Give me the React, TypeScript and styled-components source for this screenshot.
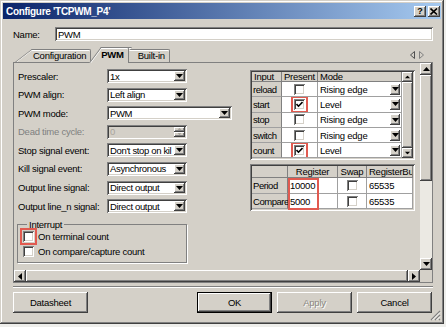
import React from 'react'
import styled, { createGlobalStyle } from 'styled-components'

const FONT = `"Liberation Sans", Arial, sans-serif`
const FACE = '#d4d0c8'
const RAISED = `inset -1px -1px #404040, inset 1px 1px #ffffff, inset -2px -2px #808080, inset 2px 2px ${FACE}`
const SUNKEN = `inset 1px 1px #808080, inset -1px -1px #ffffff, inset 2px 2px #404040, inset -2px -2px ${FACE}`
const MARK = '#e15a50'

type Dir = 'up' | 'down' | 'left' | 'right'

const ARROWS: Record<Dir, { w: number; h: number; pts: string }> = {
  up: { w: 7, h: 4, pts: '0,4 7,4 3.5,0' },
  down: { w: 7, h: 4, pts: '0,0 7,0 3.5,4' },
  left: { w: 4, h: 7, pts: '4,0 4,7 0,3.5' },
  right: { w: 4, h: 7, pts: '0,0 0,7 4,3.5' },
}

const Arrow = ({ dir, color = '#000' }: { dir: Dir; color?: string }) => {
  const a = ARROWS[dir]
  return (
    <svg width={a.w} height={a.h} viewBox={`0 0 ${a.w} ${a.h}`}>
      <polygon points={a.pts} fill={color} />
    </svg>
  )
}

const Check = ({ checked, marked }: { checked?: boolean; marked?: boolean }) => (
  <CheckBox $marked={marked}>
    {checked && (
      <svg width="7" height="7" viewBox="0 0 7 7">
        <path d="M0.5 3 L2.5 5.2 L6.5 1" stroke="#000" strokeWidth="1.6" fill="none" />
      </svg>
    )}
  </CheckBox>
)

const fields = [
  { label: 'Prescaler:', value: '1x', w: 80 },
  { label: 'PWM align:', value: 'Left align', w: 80 },
  { label: 'PWM mode:', value: 'PWM', w: 125 },
  { label: 'Dead time cycle:', value: '0', w: 80, spin: true },
  { label: 'Stop signal event:', value: "Don't stop on kil", w: 80 },
  { label: 'Kill signal event:', value: 'Asynchronous', w: 80 },
  { label: 'Output line signal:', value: 'Direct output', w: 80 },
  { label: 'Output line_n signal:', value: 'Direct output', w: 80 },
]

const inputs = [
  { name: 'reload', on: false, mode: 'Rising edge' },
  { name: 'start', on: true, mode: 'Level' },
  { name: 'stop', on: false, mode: 'Rising edge' },
  { name: 'switch', on: false, mode: 'Rising edge' },
  { name: 'count', on: true, mode: 'Level' },
]

const registers = [
  { name: 'Period', value: '10000', buf: '65535' },
  { name: 'Compare', value: '5000', buf: '65535' },
]

const App = () => {
  return (
    <>
      <GlobalStyle />
      <Dialog>
        <TitleBar>
          <TitleText>Configure 'TCPWM_P4'</TitleText>
          <CaptionButtons>
            <CaptionButton><HelpMark>?</HelpMark></CaptionButton>
            <CaptionButton>
              <svg width="8" height="7" viewBox="0 0 8 7">
                <path d="M0.5 0.5 L7 6.5 M7 0.5 L0.5 6.5" stroke="#000" strokeWidth="1.6" />
              </svg>
            </CaptionButton>
          </CaptionButtons>
        </TitleBar>

        <Client>
          <NameRow>
            <NameLabel>Name:</NameLabel>
            <TextBox>PWM</TextBox>
          </NameRow>

          <TabStrip>
            <Tab $slant={17} $pad={18}><TabLabel>Configuration</TabLabel></Tab>
            <Tab $slant={12} $pad={12} $overlap={2} $active><TabLabel>PWM</TabLabel></Tab>
            <Tab $slant={17} $pad={26} $overlap={17}><TabLabel>Built-in</TabLabel></Tab>
            <TabScroll>
              <svg width="5" height="8" viewBox="0 0 5 8"><polygon points="4.5,0.5 4.5,7.5 0.5,4" fill="none" stroke="#505050" /></svg>
              <svg width="5" height="8" viewBox="0 0 5 8"><polygon points="0.5,0.5 0.5,7.5 4.5,4" fill="none" stroke="#808080" /></svg>
            </TabScroll>
          </TabStrip>

          <Panel>
            <Viewport>
              <Form>
                {fields.map((f) => (
                  <FormRow key={f.label}>
                    <FieldLabel $disabled={f.spin}>{f.label}</FieldLabel>
                    {f.spin ? (
                      <Spin $w={f.w}>
                        <SpinText>{f.value}</SpinText>
                        <SpinButtons>
                          <SpinButton><Arrow dir="up" color="#a8a49c" /></SpinButton>
                          <SpinButton><Arrow dir="down" color="#a8a49c" /></SpinButton>
                        </SpinButtons>
                      </Spin>
                    ) : (
                      <Combo $w={f.w}>
                        <ComboText>{f.value}</ComboText>
                        <DropButton><Arrow dir="down" /></DropButton>
                      </Combo>
                    )}
                  </FormRow>
                ))}
                <Group>
                  <Legend>Interrupt</Legend>
                  <CheckRow>
                    <Check marked />
                    <span>On terminal count</span>
                  </CheckRow>
                  <CheckRow>
                    <Check />
                    <span>On compare/capture count</span>
                  </CheckRow>
                </Group>
              </Form>

              <Side>
                <GridFrame>
                  <InputGrid>
                    <HeadCell>Input</HeadCell>
                    <HeadCell $center>Present</HeadCell>
                    <HeadCell>Mode</HeadCell>
                    {inputs.map((r) => (
                      <React.Fragment key={r.name}>
                        <RowHead>{r.name}</RowHead>
                        <Cell $center>
                          <Check checked={r.on} marked={r.on} />
                        </Cell>
                        <Cell>
                          <ModeText>{r.mode}</ModeText>
                          <CellDrop><Arrow dir="down" /></CellDrop>
                        </Cell>
                      </React.Fragment>
                    ))}
                  </InputGrid>
                  <MiniScroll>
                    <MiniButton><Arrow dir="up" /></MiniButton>
                    <MiniThumb />
                    <MiniButton><Arrow dir="down" /></MiniButton>
                  </MiniScroll>
                </GridFrame>

                <GridFrame>
                  <RegisterGrid>
                    <HeadCell />
                    <HeadCell $center>Register</HeadCell>
                    <HeadCell $center>Swap</HeadCell>
                    <HeadCell>RegisterBu</HeadCell>
                    {registers.map((r) => (
                      <React.Fragment key={r.name}>
                        <RowHead>{r.name}</RowHead>
                        <Cell>{r.value}</Cell>
                        <Cell $center><Check /></Cell>
                        <Cell>{r.buf}</Cell>
                      </React.Fragment>
                    ))}
                  </RegisterGrid>
                  <ValueMark />
                </GridFrame>
              </Side>
            </Viewport>

            <VScroll>
              <ScrollButton><Arrow dir="up" /></ScrollButton>
              <Thumb $len={106} />
              <Track />
              <ScrollButton><Arrow dir="down" /></ScrollButton>
            </VScroll>
            <HScroll>
              <ScrollButton><Arrow dir="left" /></ScrollButton>
              <Thumb />
              <ScrollButton><Arrow dir="right" /></ScrollButton>
            </HScroll>
            <Corner />
          </Panel>

          <Separator />

          <ButtonRow>
            <Button>Datasheet</Button>
            <Spacer />
            <Button $default>OK</Button>
            <Button disabled>Apply</Button>
            <Button>Cancel</Button>
          </ButtonRow>
        </Client>

        <SizeGrip>
          <svg width="11" height="11" viewBox="0 0 11 11">
            <path d="M10 1 L1 10 M10 5 L5 10 M10 9 L9 10" stroke="#808080" strokeWidth="1.2" />
            <path d="M10 2.5 L2.5 10 M10 6.5 L6.5 10" stroke="#ffffff" strokeWidth="1" />
          </svg>
        </SizeGrip>
      </Dialog>
    </>
  )
}

export default App

const GlobalStyle = createGlobalStyle`
  html, body { margin: 0; padding: 0; }
  body {
    width: 446px;
    height: 327px;
    overflow: hidden;
    background: #eeeeeb;
    font-family: ${FONT};
    font-size: 9.5px;
    letter-spacing: -0.25px;
    color: #000;
  }
  * { box-sizing: border-box; }
`

const Dialog = styled.div`
  position: relative;
  width: 444px;
  height: 324px;
  padding: 3px;
  background: ${FACE};
  box-shadow: inset -1px -1px #404040, inset 1px 1px ${FACE}, inset -2px -2px #808080, inset 2px 2px #ffffff;
  display: flex;
  flex-direction: column;
`

const TitleBar = styled.div`
  flex: none;
  height: 16px;
  display: flex;
  align-items: center;
  padding: 0 1px 0 3px;
  background: linear-gradient(to right, #0a246a, #a6caf0);
`

const TitleText = styled.span`
  color: #fff;
  font-weight: 700;
  font-size: 10px;
  letter-spacing: -0.3px;
  white-space: nowrap;
`

const CaptionButtons = styled.div`
  margin-left: auto;
  display: flex;
  gap: 2px;
`

const CaptionButton = styled.div`
  width: 12px;
  height: 11px;
  background: ${FACE};
  box-shadow: ${RAISED};
  display: flex;
  align-items: center;
  justify-content: center;
`

const HelpMark = styled.span`
  font-weight: 700;
  font-size: 9px;
  line-height: 1;
  letter-spacing: 0;
`

const Client = styled.div`
  flex: 1;
  display: flex;
  flex-direction: column;
  padding: 0 8px 0 10px;
`

const NameRow = styled.div`
  display: flex;
  align-items: center;
  height: 14px;
  margin-top: 8px;
`

const NameLabel = styled.span`
  width: 42px;
`

const TextBox = styled.div`
  flex: 1;
  height: 14px;
  background: #fff;
  box-shadow: ${SUNKEN};
  padding: 0 3px;
  display: flex;
  align-items: center;
`

const TabStrip = styled.div`
  display: flex;
  align-items: flex-end;
  height: 16px;
  margin-top: 5px;
  padding-left: 2px;
`

const Tab = styled.div<{ $active?: boolean; $slant: number; $pad: number; $overlap?: number }>`
  position: relative;
  display: flex;
  align-items: center;
  height: ${(p) => (p.$active ? 16 : 13)}px;
  margin-left: ${(p) => -(p.$overlap ?? 0)}px;
  margin-bottom: ${(p) => (p.$active ? -1 : 0)}px;
  padding: 0 5px ${(p) => (p.$active ? 1 : 0)}px ${(p) => p.$pad}px;
  z-index: ${(p) => (p.$active ? 2 : 1)};
  font-weight: ${(p) => (p.$active ? 700 : 400)};
  white-space: nowrap;

  &::before {
    content: '';
    position: absolute;
    left: 0;
    top: 0;
    bottom: 0;
    width: 30px;
    background: ${FACE};
    border-left: 1px solid #808080;
    border-top: 1px solid #808080;
    box-shadow: inset 1px 1px #fff;
    transform-origin: bottom left;
    transform: skewX(${(p) => -Math.atan(p.$slant / (p.$active ? 16 : 13)) * 180 / Math.PI}deg);
  }

  &::after {
    content: '';
    position: absolute;
    left: ${(p) => p.$slant}px;
    right: 0;
    top: 0;
    bottom: 0;
    background: ${FACE};
    border-top: 1px solid #808080;
    border-right: 1px solid #808080;
    border-top-right-radius: 2px;
    box-shadow: inset 0 1px #fff;
  }
`

const TabLabel = styled.span`
  position: relative;
  z-index: 1;
`

const TabScroll = styled.div`
  margin-left: auto;
  margin-right: 9px;
  margin-bottom: 3px;
  display: flex;
  gap: 4px;
`

const Panel = styled.div`
  flex: none;
  height: 221px;
  border: 1px solid #808080;
  display: grid;
  grid-template-columns: 1fr 12px;
  grid-template-rows: 1fr 12px;
  background: ${FACE};
`

const Viewport = styled.div`
  display: flex;
  overflow: hidden;
`

const Form = styled.div`
  width: 236px;
  flex: none;
  padding: 6px 0 0 4px;
  display: flex;
  flex-direction: column;
`

const FormRow = styled.div`
  display: grid;
  grid-template-columns: 89px auto;
  align-items: center;
  height: 14px;
  margin-bottom: 4.6px;
`

const FieldLabel = styled.span<{ $disabled?: boolean }>`
  color: ${(p) => (p.$disabled ? '#808080' : '#000')};
  white-space: nowrap;
`

const Combo = styled.div<{ $w: number }>`
  width: ${(p) => p.$w}px;
  height: 14px;
  padding: 2px;
  background: #fff;
  box-shadow: ${SUNKEN};
  display: flex;
  align-items: center;
`

const ComboText = styled.span`
  flex: 1;
  padding-left: 1px;
  overflow: hidden;
  white-space: nowrap;
  letter-spacing: -0.35px;
`

const DropButton = styled.div`
  width: 11px;
  align-self: stretch;
  background: ${FACE};
  box-shadow: ${RAISED};
  display: flex;
  align-items: center;
  justify-content: center;
`

const Spin = styled(Combo)`
  background: ${FACE};
`

const SpinText = styled(ComboText)`
  color: #a8a49c;
`

const SpinButtons = styled.div`
  width: 11px;
  align-self: stretch;
  display: flex;
  flex-direction: column;
`

const SpinButton = styled.div`
  flex: 1;
  background: ${FACE};
  box-shadow: ${RAISED};
  display: flex;
  align-items: center;
  justify-content: center;
  svg { transform: scale(0.6); }
`

const Group = styled.fieldset`
  width: 170px;
  margin: 1px 0 0 -1px;
  padding: 1px 0 5px 5px;
  border: 1px solid #808080;
  box-shadow: 1px 1px 0 #fff;
  display: flex;
  flex-direction: column;
  gap: 4px;
`

const Legend = styled.legend`
  padding: 0 2px;
  margin-left: 4px;
`

const CheckRow = styled.div`
  display: flex;
  align-items: center;
  gap: 4px;
  height: 11px;
`

const CheckBox = styled.span<{ $marked?: boolean }>`
  width: 11px;
  height: 11px;
  flex: none;
  display: flex;
  align-items: center;
  justify-content: center;
  background: #fff;
  box-shadow: ${SUNKEN};
  outline: ${(p) => (p.$marked ? `2px solid ${MARK}` : 'none')};
  outline-offset: 1px;
`

const Side = styled.div`
  width: 165px;
  flex: none;
  padding-top: 7px;
  display: flex;
  flex-direction: column;
  gap: 4px;
`

const GridFrame = styled.div`
  position: relative;
  display: flex;
  padding: 2px;
  box-shadow: ${SUNKEN};
  background: ${FACE};
`

const InputGrid = styled.div`
  flex: 1;
  display: grid;
  grid-template-columns: 30px 36px 1fr;
  grid-template-rows: 10px repeat(5, 15.3px);
`

const RegisterGrid = styled.div`
  flex: 1;
  display: grid;
  grid-template-columns: 36px 50px 29px 1fr;
  grid-template-rows: 12px repeat(2, 15.5px);
`

const HeadCell = styled.div<{ $center?: boolean }>`
  background: ${FACE};
  border-right: 1px solid #808080;
  border-bottom: 1px solid #808080;
  display: flex;
  align-items: center;
  justify-content: ${(p) => (p.$center ? 'center' : 'flex-start')};
  padding-left: ${(p) => (p.$center ? 0 : 2)}px;
  overflow: hidden;
  white-space: nowrap;
  line-height: 10px;
`

const RowHead = styled.div`
  background: ${FACE};
  border-right: 1px solid #808080;
  border-bottom: 1px solid #a0a0a0;
  display: flex;
  align-items: center;
  padding-left: 1px;
  white-space: nowrap;
  letter-spacing: -0.45px;
`

const Cell = styled.div<{ $center?: boolean }>`
  background: #fff;
  border-right: 1px solid #a0a0a0;
  border-bottom: 1px solid #a0a0a0;
  display: flex;
  align-items: center;
  justify-content: ${(p) => (p.$center ? 'center' : 'flex-start')};
  padding-left: ${(p) => (p.$center ? 0 : 2)}px;
  white-space: nowrap;
  overflow: hidden;
`

const ModeText = styled.span`
  flex: 1;
`

const CellDrop = styled.div`
  width: 10px;
  height: 11px;
  margin-right: 1px;
  background: ${FACE};
  box-shadow: ${RAISED};
  display: flex;
  align-items: center;
  justify-content: center;
`

const MiniScroll = styled.div`
  width: 11px;
  flex: none;
  display: flex;
  flex-direction: column;
  background: #ebe9e3;
`

const MiniButton = styled.div`
  height: 10px;
  flex: none;
  background: ${FACE};
  box-shadow: ${RAISED};
  display: flex;
  align-items: center;
  justify-content: center;
  svg { transform: scale(0.8); }
`

const MiniThumb = styled.div`
  flex: 1;
  background: ${FACE};
  box-shadow: ${RAISED};
`

const ValueMark = styled.div`
  position: absolute;
  left: 38px;
  top: 14px;
  width: 31px;
  height: 32px;
  border: 2px solid ${MARK};
`

const VScroll = styled.div`
  display: flex;
  flex-direction: column;
  background: #ebe9e3;
`

const HScroll = styled.div`
  display: flex;
  background: #ebe9e3;
`

const ScrollButton = styled.div`
  width: 12px;
  height: 12px;
  flex: none;
  background: ${FACE};
  box-shadow: ${RAISED};
  display: flex;
  align-items: center;
  justify-content: center;
`

const Thumb = styled.div<{ $len?: number }>`
  flex: ${(p) => (p.$len ? `0 0 ${p.$len}px` : '1')};
  background: ${FACE};
  box-shadow: ${RAISED};
`

const Track = styled.div`
  flex: 1;
`

const Corner = styled.div`
  background: ${FACE};
`

const Separator = styled.div`
  margin-top: 3px;
  height: 2px;
  border-top: 1px solid #808080;
  border-bottom: 1px solid #fff;
`

const ButtonRow = styled.div`
  display: flex;
  gap: 5px;
  height: 21px;
  margin-top: 4px;
  padding-right: 1px;
`

const Spacer = styled.div`
  flex: 1;
`

const Button = styled.button<{ $default?: boolean }>`
  width: 75px;
  height: 21px;
  padding: 0;
  border: none;
  font-family: ${FONT};
  font-size: 9.5px;
  letter-spacing: -0.25px;
  background: ${FACE};
  color: #000;
  box-shadow: ${(p) =>
    p.$default
      ? 'inset 0 0 0 1px #000, inset -2px -2px #404040, inset 2px 2px #fff, inset -3px -3px #808080'
      : RAISED};

  &:disabled {
    color: #8a8780;
    text-shadow: 1px 1px 0 #fff;
  }
`

const SizeGrip = styled.div`
  position: absolute;
  right: 3px;
  bottom: 3px;
  width: 11px;
  height: 11px;
  display: flex;
`
